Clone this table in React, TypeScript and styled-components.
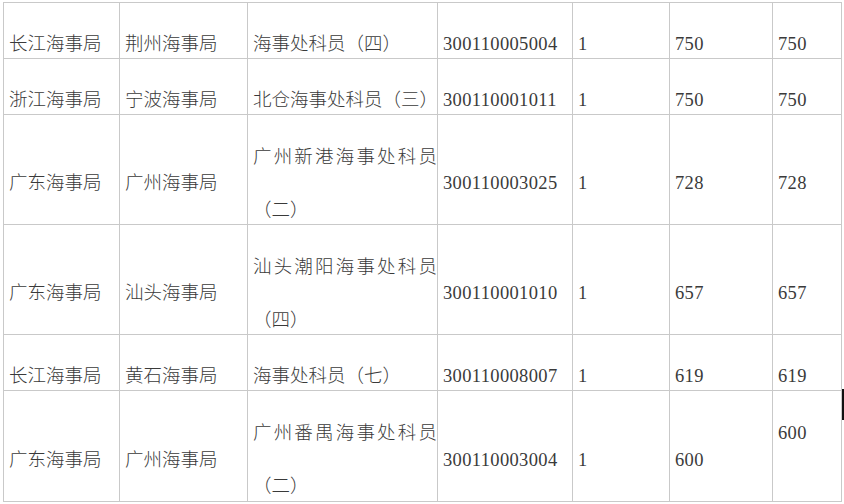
import React from "react";
import styled, { createGlobalStyle } from "styled-components";

const Global = createGlobalStyle`
  html, body {
    margin: 0;
    padding: 0;
    background: #ffffff;
  }
  body {
    width: 844px;
    height: 504px;
    overflow: hidden;
    font-family: "Liberation Serif", "Noto Sans CJK SC", serif;
  }
`;

const Page = styled.div`
  position: relative;
  width: 844px;
  height: 504px;
  padding: 2px 0 0 3px;
  box-sizing: border-box;
`;

const Grid = styled.div<{ $rows: string }>`
  display: grid;
  grid-template-columns: 116px 128px 190px 135px 97px 103px 69px;
  grid-template-rows: ${(p) => p.$rows};
  width: max-content;
  border-left: 1px solid #c9c9c9;
  border-top: 1px solid #c9c9c9;
`;

const Cell = styled.div`
  box-sizing: border-box;
  display: flex;
  flex-direction: column;
  justify-content: center;
  padding: 28px 0 0 5px;
  border-right: 1px solid #c9c9c9;
  border-bottom: 1px solid #c9c9c9;
  font-size: 18.5px;
  line-height: 53px;
  color: #3a3a3a;
  overflow: visible;
  min-width: 0;
`;

const Text = styled.div<{ $justify?: boolean }>`
  text-align: ${(p) => (p.$justify ? "justify" : "left")};
  white-space: normal;
  font-weight: 300;
`;

const Num = styled.div`
  letter-spacing: 0.35px;
  white-space: nowrap;
`;

const Line = styled.div`
  height: 53px;
  letter-spacing: 0.35px;
`;

const Caret = styled.div`
  position: absolute;
  left: 842px;
  top: 389px;
  width: 2px;
  height: 31px;
  background: #111;
`;

type Row = { h: number; c: (string | string[])[] };

const rows: Row[] = [
  { h: 56, c: ["长江海事局", "荆州海事局", "海事处科员（四）", "300110005004", "1", "750", "750"] },
  { h: 56, c: ["浙江海事局", "宁波海事局", "北仓海事处科员（三）", "300110001011", "1", "750", "750"] },
  { h: 110, c: ["广东海事局", "广州海事局", "广州新港海事处科员（二）", "300110003025", "1", "728", "728"] },
  { h: 110, c: ["广东海事局", "汕头海事局", "汕头潮阳海事处科员（四）", "300110001010", "1", "657", "657"] },
  { h: 56, c: ["长江海事局", "黄石海事局", "海事处科员（七）", "300110008007", "1", "619", "619"] },
  { h: 111, c: ["广东海事局", "广州海事局", "广州番禺海事处科员（二）", "300110003004", "1", "600", ["600", ""]] },
];

export default function App() {
  return (
    <>
      <Global />
      <Page>
        <Grid $rows={rows.map((r) => `${r.h}px`).join(" ")}>
          {rows.map((r, ri) =>
            r.c.map((v, ci) => (
              <Cell key={`${ri}-${ci}`}>
                {Array.isArray(v) ? (
                  v.map((l, li) => <Line key={li}>{l || "\u00a0"}</Line>)
                ) : ci >= 3 ? (
                  <Num>{v}</Num>
                ) : (
                  <Text $justify={ci === 2}>{v}</Text>
                )}
              </Cell>
            ))
          )}
        </Grid>
        <Caret />
      </Page>
    </>
  );
}
